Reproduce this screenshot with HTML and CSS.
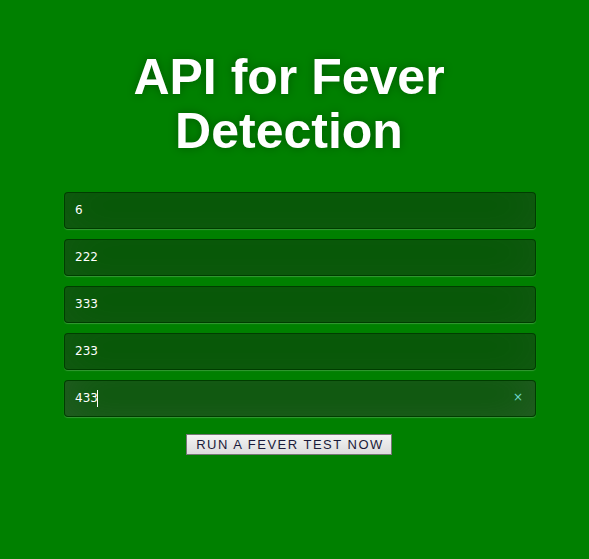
FILE: index.html
```html
<!DOCTYPE html>
<html>
<head>
<meta charset="utf-8">
<title>API for Fever Detection</title>
<link rel="stylesheet" href="styles.css">
</head>
<body>
<div class="login">
  <h1 class="title">API for Fever Detection</h1>
  <form class="form">
    <input class="field" type="text" value="6">
    <input class="field" type="text" value="222">
    <input class="field" type="text" value="333">
    <input class="field" type="text" value="233">
    <div class="field-wrap">
      <input class="field field-focus" type="text" value="433">
      <span class="caret"></span>
      <span class="clear">×</span>
    </div>
    <div class="actions">
      <button class="btn" type="button">RUN A FEVER TEST NOW</button>
    </div>
  </form>
</div>
</body>
</html>
```

FILE: styles.css
```css
html, body {
  margin: 0;
  padding: 0;
  background: #008000;
  height: 100%;
}
.login {
  width: 450px;
  margin-left: 64px;
  padding-top: 50px;
}
.title {
  margin: 0 0 34px 0;
  font-family: "Liberation Sans", Arial, sans-serif;
  font-weight: bold;
  font-size: 50px;
  line-height: 54px;
  color: #fff;
  text-align: center;
  text-shadow: 0 0 10px rgba(0,0,0,0.3);
  padding: 0 10px;
}
.form {
  margin: 0;
}
.field, .field-wrap {
  display: block;
}
.field {
  width: 450px;
  margin: 0 0 10px 0;
  padding: 10px;
  font-family: "DejaVu Sans", Verdana, sans-serif;
  font-size: 12px;
  line-height: 15px;
  height: 15px;
  color: #fff;
  background: rgba(0,0,0,0.32);
  border: 1px solid rgba(0,0,0,0.3);
  border-radius: 4px;
  outline: none;
  box-shadow: inset 0 -5px 45px rgba(100,100,100,0.2), 0 1px 1px rgba(255,255,255,0.2);
}
.field-focus {
  box-shadow: inset 0 -5px 45px rgba(100,100,100,0.4), 0 1px 1px rgba(255,255,255,0.2);
}
.field-wrap {
  position: relative;
}
.caret {
  position: absolute;
  left: 33px;
  top: 10px;
  width: 1px;
  height: 17px;
  background: #fff;
}
.clear {
  position: absolute;
  left: 449px;
  top: 9px;
  font-family: "DejaVu Sans", sans-serif;
  font-size: 12px;
  line-height: 17px;
  color: #6fd6c6;
}
.actions {
  text-align: center;
  padding-top: 7px;
}
.btn {
  font-family: "Liberation Sans", Arial, sans-serif;
  font-size: 13px;
  letter-spacing: 1.5px;
  color: #1a1a3a;
  padding: 2px 7px 2px 9px;
  height: 21px;
  background: linear-gradient(#f3f3f3, #dcdcdc);
  border: 1px solid #767676;
  border-radius: 0;
  line-height: 15px;
}
```
